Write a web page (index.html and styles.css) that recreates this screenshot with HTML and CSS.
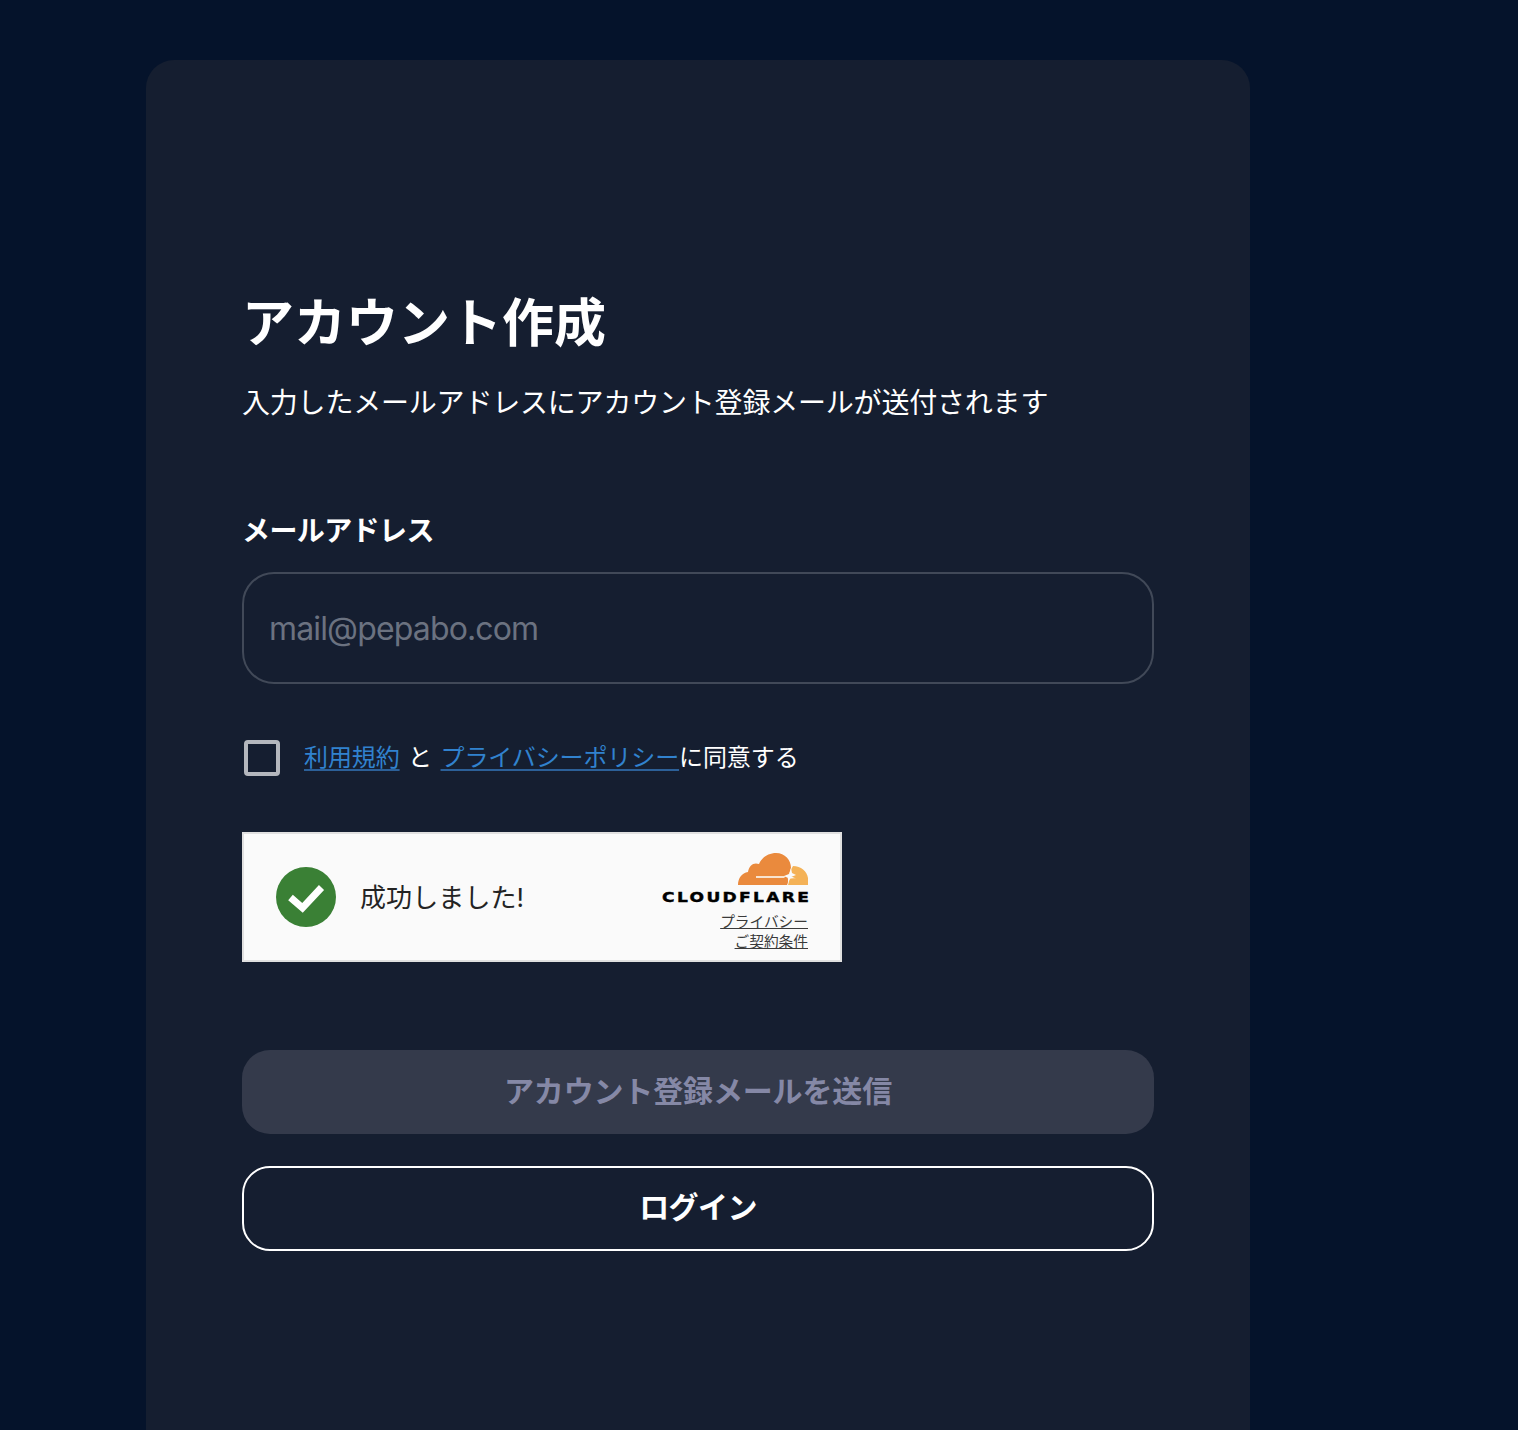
FILE: index.html
```html
<!DOCTYPE html>
<html lang="ja">
<head>
<meta charset="utf-8">
<title>アカウント作成</title>
<link rel="stylesheet" href="styles.css">
</head>
<body>
<main class="card">
  <h1 class="title">アカウント作成</h1>
  <p class="lead">入力したメールアドレスにアカウント登録メールが送付されます</p>
  <label class="label" for="email">メールアドレス</label>
  <input class="input" id="email" type="text" placeholder="mail@pepabo.com">
  <div class="agree">
    <span class="check"></span>
    <span class="agree-text"><a href="#">利用規約</a><span class="sep">と</span><a href="#">プライバシーポリシー</a>に同意する</span>
  </div>
  <div class="widget">
    <svg class="ok" viewBox="0 0 60 60" width="60" height="60"><circle cx="30" cy="30" r="30" fill="#3a8035"/><path d="M14.5 30.5 L26.5 41 L45.5 20.5" fill="none" stroke="#fff" stroke-width="7"/></svg>
    <span class="ok-text">成功しました!</span>
    <div class="brand">
      <svg class="cloud" viewBox="0 0 70 32" width="70" height="32">
        <path d="M0 32 C0 25 4 20 10 19 C11 12 16 9 21 11 C24 4 31 0 38 0 C47 0 53 7 53 15 L51 22 L47 32 Z" fill="#ea8a3d"/>
        <path d="M18 23 H48 L46 25 H18 Z" fill="#f8e3cf"/>
        <path d="M45 25 H49 C50 25 51 28 49 32 H45 Z" fill="#ea8a3d"/>
        <path d="M50 32 C51 29 51 27 50 26 C54 25 58 25 59 26 L50 22 L55 13 C63 13 69 18 70 25 V32 Z" fill="#f4b257"/>
        <path d="M53 15 L54 20 L58 22 L53 24 L50 30 L50 25 L46 23 L51 21 Z" fill="#fafafa"/>
      </svg>
      <span class="wordmark">CLOUDFLARE</span>
      <a class="mini" href="#">プライバシー</a>
      <a class="mini" href="#">ご契約条件</a>
    </div>
  </div>
  <button class="btn btn-disabled" type="button">アカウント登録メールを送信</button>
  <button class="btn btn-outline" type="button">ログイン</button>
</main>
</body>
</html>
```
FILE: styles.css
```css
* { box-sizing: border-box; }
html, body { height: 100%; }
body {
  margin: 0;
  height: 1430px;
  overflow: hidden;
  background: #05132b;
  color: #fff;
  font-family: Inter, "Noto Sans CJK JP", sans-serif;
  padding: 60px 268px 0 146px;
}
.card {
  height: 1400px;
  background: #151e30;
  border-radius: 28px;
  padding: 229px 96px 0;
}
.title {
  margin: 0;
  font-size: 52px;
  line-height: 70px;
  font-weight: 700;
}
.lead {
  margin: 24px 0 0;
  font-size: 28px;
  line-height: 40px;
  font-weight: 400;
  letter-spacing: -0.2px;
}
.label {
  display: block;
  margin-top: 88px;
  font-size: 28px;
  line-height: 40px;
  font-weight: 700;
  letter-spacing: -0.6px;
}
.input {
  display: block;
  width: 100%;
  height: 112px;
  margin-top: 21px;
  padding: 0 25px;
  background: transparent;
  border: 2px solid #414958;
  border-radius: 32px;
  color: #fff;
  font: 400 32px Inter, "Noto Sans CJK JP", sans-serif;
  letter-spacing: -0.85px;
}
.input::placeholder { color: #6b7280; opacity: 1; }
.agree {
  display: flex;
  align-items: center;
  gap: 24px;
  margin: 56px 0 0 2px;
  height: 36px;
}
.check {
  width: 36px;
  height: 36px;
  border: 4px solid #b4b7bd;
  border-radius: 4px;
}
.agree-text { font-size: 24px; line-height: 36px; letter-spacing: -0.1px; margin-top: -1px; }
.agree-text a {
  color: #3182ce;
  text-decoration: underline;
  text-decoration-color: #2c6098;
  text-underline-offset: 3px;
}
.sep { margin: 0 8.5px; }
.widget {
  display: flex;
  align-items: center;
  width: 600px;
  height: 130px;
  margin-top: 56px;
  padding: 0 32px;
  background: #fafafa;
  border: 2px solid #e0e0e0;
  color: #232323;
}
.ok { flex: none; }
.ok-text { margin: 2px 0 0 24px; font-size: 26px; line-height: 36px; letter-spacing: 0.1px; }
.brand {
  margin: 11px 0 0 auto;
  display: flex;
  flex-direction: column;
  align-items: flex-end;
}
.cloud { display: block; }
.wordmark {
  margin: 3px -3px 6px 0;
  font-family: "DejaVu Sans", sans-serif;
  font-weight: 700;
  font-size: 14px;
  line-height: 18px;
  letter-spacing: 1.9px;
  color: #000;
  -webkit-text-stroke: 0.4px #000;
  transform: scaleX(1.22);
  transform-origin: right center;
}
.mini {
  font-size: 14.7px;
  line-height: 20px;
  color: #3a3a3a;
  text-decoration: underline;
}
.btn {
  display: block;
  width: 100%;
  height: 84px;
  padding: 0 0 7px;
  border-radius: 28px;
  font: 700 30px Inter, "Noto Sans CJK JP", sans-serif;
}
.btn-disabled {
  margin-top: 88px;
  background: #343a4b;
  border: 0;
  color: #8588a6;
  letter-spacing: -0.15px;
}
.btn-outline {
  height: 85px;
  margin-top: 32px;
  background: transparent;
  border: 2px solid #fff;
  color: #fff;
  letter-spacing: -0.6px;
}
```
